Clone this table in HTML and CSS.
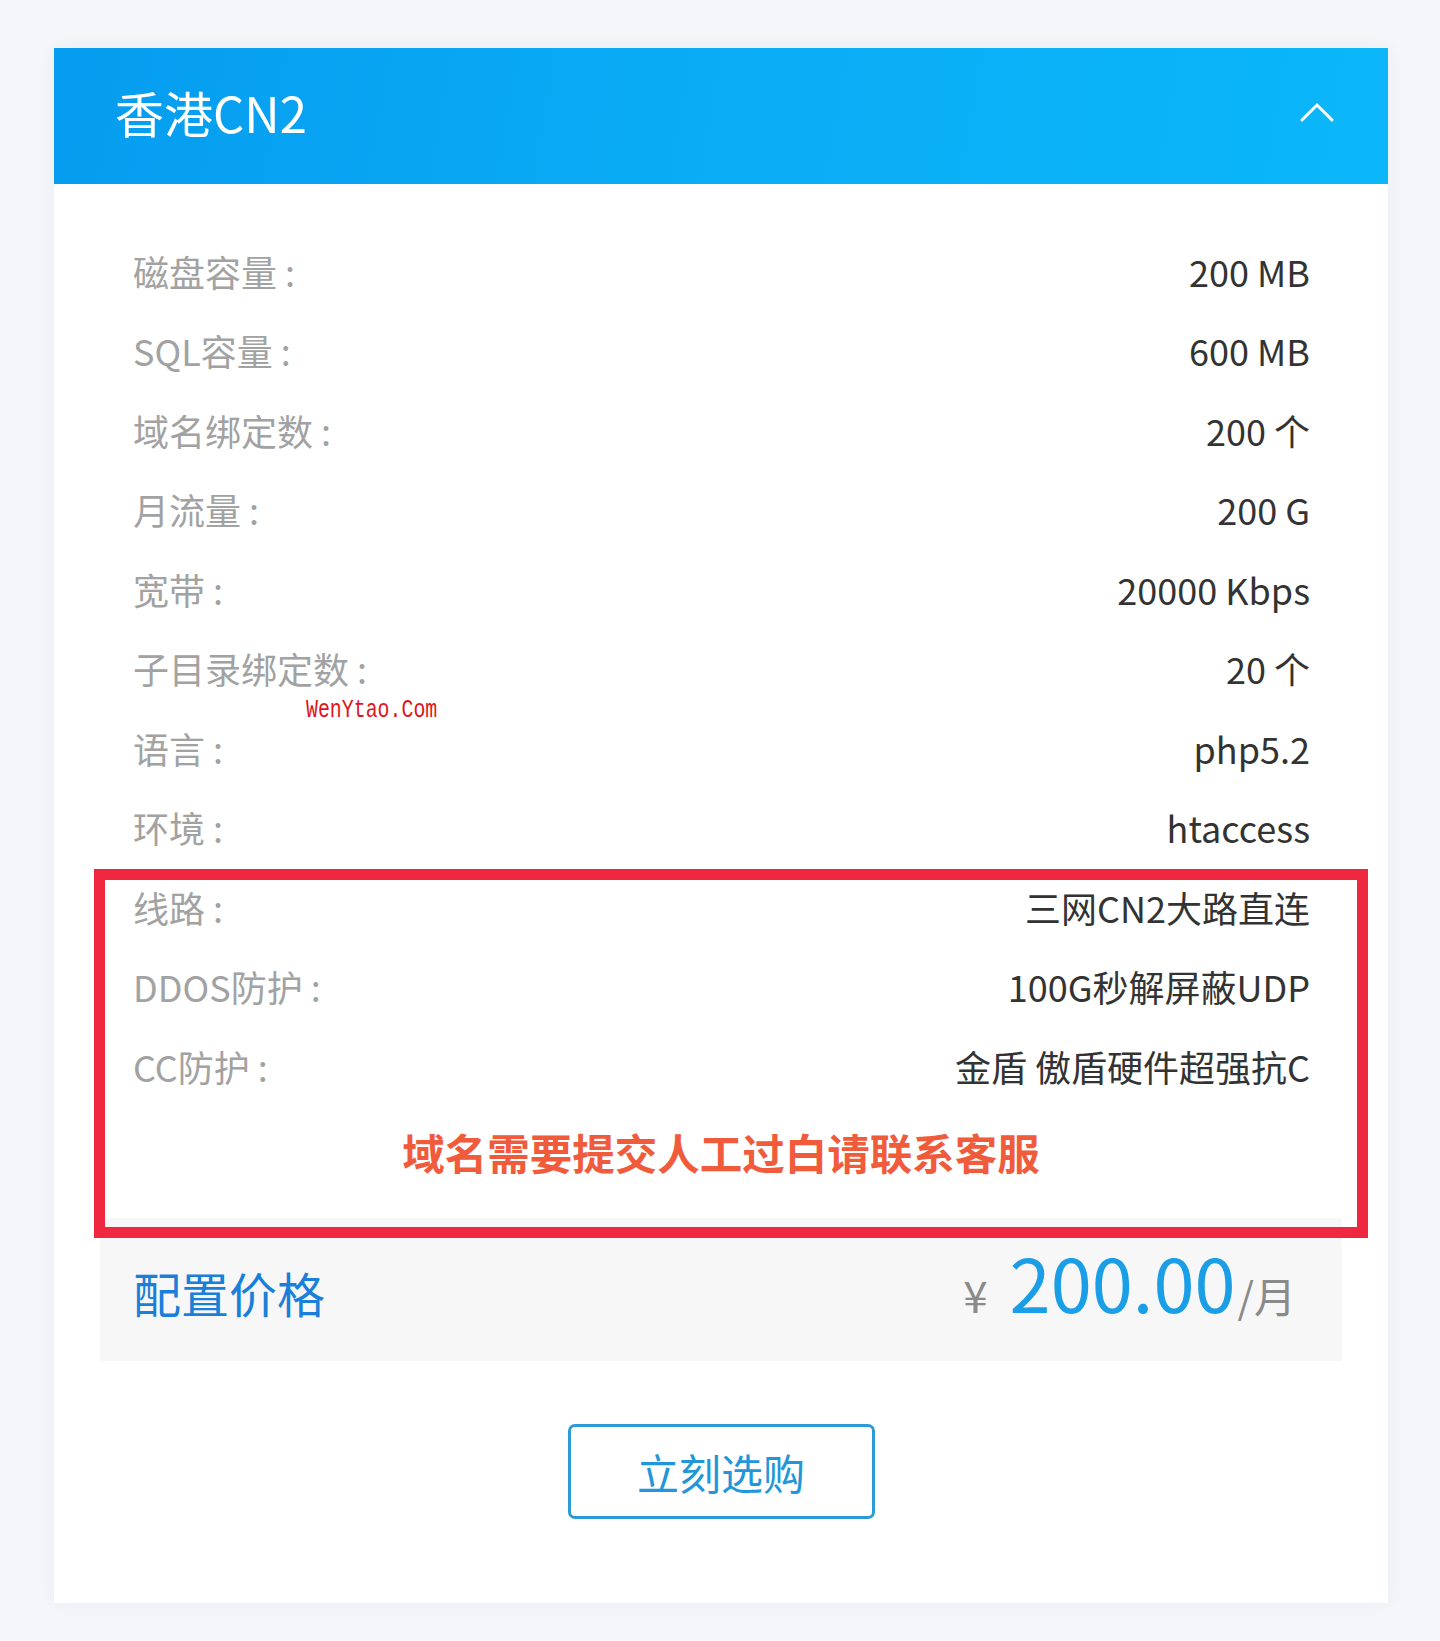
FILE: index.html
```html
<!DOCTYPE html>
<html lang="zh-CN">
<head>
<meta charset="utf-8">
<title>香港CN2</title>
<link rel="stylesheet" href="styles.css">
</head>
<body>
<div class="card">
  <div class="card-head">
    <h2 class="card-title">香港CN2</h2>
    <svg class="chevron" width="34" height="20" viewBox="0 0 34 20"><polyline points="2,18 17,3 32,18" fill="none" stroke="#ffffff" stroke-width="3" stroke-linecap="round" stroke-linejoin="miter"/></svg>
  </div>
  <div class="card-body">
    <div class="specs">
      <div class="row"><span class="label">磁盘容量 :</span><span class="value">200 MB</span></div>
      <div class="row"><span class="label">SQL容量 :</span><span class="value">600 MB</span></div>
      <div class="row"><span class="label">域名绑定数 :</span><span class="value">200 个</span></div>
      <div class="row"><span class="label">月流量 :</span><span class="value">200 G</span></div>
      <div class="row"><span class="label">宽带 :</span><span class="value">20000 Kbps</span></div>
      <div class="row"><span class="label">子目录绑定数 :</span><span class="value">20 个</span></div>
      <div class="row"><span class="label">语言 :</span><span class="value">php5.2</span></div>
      <div class="row"><span class="label">环境 :</span><span class="value">htaccess</span></div>
      <div class="row"><span class="label">线路 :</span><span class="value">三网CN2大路直连</span></div>
      <div class="row"><span class="label">DDOS防护 :</span><span class="value">100G秒解屏蔽UDP</span></div>
      <div class="row"><span class="label">CC防护 :</span><span class="value">金盾 傲盾硬件超强抗C</span></div>
    </div>
    <p class="note">域名需要提交人工过白请联系客服</p>
    <div class="price">
      <span class="price-title">配置价格</span>
      <span class="price-value"><span class="yen">¥</span><span class="amount">200.00</span><span class="unit">/月</span></span>
    </div>
    <div class="actions">
      <a class="buy-btn" href="#">立刻选购</a>
    </div>
  </div>
  <div class="highlight-box"></div>
  <div class="watermark">WenYtao.Com</div>
</div>
</body>
</html>
```

FILE: styles.css
```css
* { box-sizing: border-box; }

body {
  margin: 0;
  background: #f4f6fa;
  font-family: "Noto Sans CJK SC", "Noto Sans", sans-serif;
}

.card {
  position: relative;
  width: 1334px;
  margin: 48px 0 37px 54px;
  background: #ffffff;
  box-shadow: 0 0 18px rgba(30, 50, 90, 0.05);
}

.card-head {
  height: 136px;
  display: flex;
  align-items: center;
  justify-content: space-between;
  padding: 0 54px 0 61px;
  background: linear-gradient(100deg, #069cef 0%, #0aaef6 55%, #0bb6f9 100%);
}

.card-title {
  margin: 0 0 9px;
  color: #ffffff;
  font-size: 49px;
  font-weight: 400;
  line-height: 1;
}

.chevron {
  display: block;
  margin-bottom: 8px;
}

.card-body {
  padding: 47px 46px 84px;
}

.specs {
  padding: 0 32px 0 33px;
}

.row {
  display: flex;
  align-items: center;
  justify-content: space-between;
  height: 79.5px;
  font-size: 36px;
  line-height: 1;
}

.label {
  color: #a2a2a2;
}

.value {
  color: #333333;
}

.note {
  margin: 0;
  padding: 16px 0 36px;
  text-align: center;
  font-size: 42.5px;
  line-height: 60px;
  font-weight: 700;
  color: #f05b3c;
}

.price {
  height: 143px;
  display: flex;
  align-items: center;
  justify-content: space-between;
  padding: 0 46px 0 33px;
  background: #f7f7f7;
}

.price-title {
  font-size: 48px;
  color: #1a7fd8;
  line-height: 1;
  margin-top: 6px;
}

.price-value {
  display: flex;
  align-items: baseline;
  line-height: 1;
  margin-bottom: 16px;
}

.yen {
  font-size: 44px;
  color: #8a8a8a;
  margin-right: 22px;
}

.amount {
  font-size: 74px;
  color: #1a9fe6;
}

.unit {
  font-size: 42px;
  color: #8a8a8a;
  margin-left: 2px;
}

.actions {
  display: flex;
  justify-content: center;
  padding-top: 63px;
}

.buy-btn {
  display: flex;
  align-items: center;
  justify-content: center;
  width: 307px;
  height: 95px;
  border: 3px solid #2b9ad6;
  border-radius: 7px;
  color: #2196d8;
  font-size: 42px;
  text-decoration: none;
  line-height: 1;
  padding-top: 2px;
}

.highlight-box {
  position: absolute;
  left: 40px;
  top: 821px;
  width: 1274px;
  height: 369px;
  border: 11px solid #ef2840;
  pointer-events: none;
}

.watermark {
  position: absolute;
  left: 252px;
  top: 647px;
  font-family: "Liberation Mono", "DejaVu Sans Mono", monospace;
  font-size: 26px;
  line-height: 30px;
  color: #e0141c;
  transform: scaleX(0.765);
  transform-origin: left center;
}
```
